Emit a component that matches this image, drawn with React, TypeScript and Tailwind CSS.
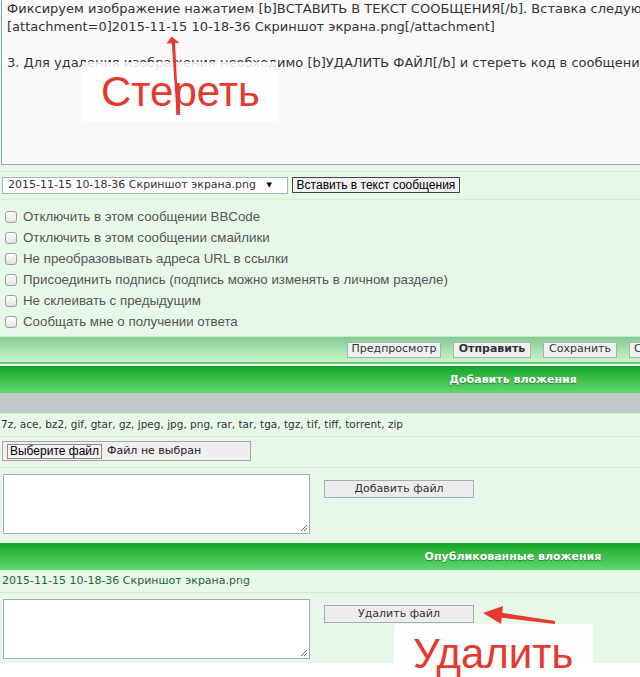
import React from 'react'

const line = 'h-px bg-[#cdeecd]'
const greyBtn =
  'flex h-[16px] shrink-0 items-center justify-center border border-[#a9b1b9] bg-[#f0f0f0] text-[11px] text-[#333]'

const OPTIONS = [
  'Отключить в этом сообщении BBCode',
  'Отключить в этом сообщении смайлики',
  'Не преобразовывать адреса URL в ссылки',
  'Присоединить подпись (подпись можно изменять в личном разделе)',
  'Не склеивать с предыдущим',
  'Сообщать мне о получении ответа',
]

function Grip() {
  return (
    <svg className="absolute bottom-[1px] right-[1px]" width="9" height="9" viewBox="0 0 9 9">
      <path d="M8 2 L2 8 M8 5 L5 8" stroke="#666" strokeWidth="1" />
    </svg>
  )
}

function Box({ children }: { children?: React.ReactNode }) {
  return (
    <div className="relative h-[60px] w-[307px] shrink-0 border border-[#a3adba] bg-white">
      {children}
      <Grip />
    </div>
  )
}

function DarkBar({ title }: { title: string }) {
  return (
    <div className="flex h-[27px] items-center bg-linear-to-b from-[#0aa526] to-[#60d86f] pt-[2px] pl-[386px]">
      <span className="w-[254px] text-center text-[11px] font-bold text-white [text-shadow:0_1px_1px_rgba(0,60,0,0.5)]">
        {title}
      </span>
    </div>
  )
}

export default function App() {
  return (
    <div className="relative h-[677px] w-[640px] overflow-hidden bg-white font-['DejaVu_Sans',sans-serif] text-[#333]">
      <div className="bg-[#e8f8e8]">
        {/* message textarea */}
        <div className="ml-[1px] h-[165px] w-[700px] border-b border-l border-[#8ea6c6] bg-[#f9f9f9] pl-[5px] text-[13px] leading-[18px] whitespace-pre text-[#333]">
          <div>Фиксируем изображение нажатием [b]ВСТАВИТЬ В ТЕКСТ СООБЩЕНИЯ[/b]. Вставка следующего кода</div>
          <div>[attachment=0]2015-11-15 10-18-36 Скриншот экрана.png[/attachment]</div>
          <div>&nbsp;</div>
          <div>3. Для удаления изображения необходимо [b]УДАЛИТЬ ФАЙЛ[/b] и стереть код в сообщении.</div>
        </div>

        <div className="h-[6px]" />
        <div className={line} />

        {/* attachment select */}
        <div className="flex h-[27px] items-start gap-[4px] pt-[5px] pl-[2px]">
          <div className="flex h-[17px] w-[286px] items-center border border-[#a9b1bd] bg-white pl-[5px] text-[11px]">
            <span className="flex-1">2015-11-15 10-18-36 Скриншот экрана.png</span>
            <span className="mr-[15px] text-[7px] text-black">▼</span>
          </div>
          <div className="flex h-[16px] w-[168px] items-center justify-center border border-[#444] bg-[#f0f0f0] font-['Liberation_Sans',sans-serif] text-[12px] text-black">
            Вставить в текст сообщения
          </div>
        </div>
        <div className={line} />

        {/* options */}
        <div className="pt-[6px] pb-[4px]">
          {OPTIONS.map((o) => (
            <div key={o} className="flex h-[21px] items-center pl-[5px]">
              <span className="h-[12px] w-[12px] rounded-[3px] border border-[#a0a0a0] bg-linear-to-b from-white to-[#e2e2e2]" />
              <span className="ml-[6px] font-['Liberation_Sans',sans-serif] text-[13.3px] text-[#555]">{o}</span>
            </div>
          ))}
        </div>

        {/* submit bar */}
        <div className="h-px bg-[#c2ecc2]" />
        <div className="flex h-[25px] items-center gap-[12px] bg-linear-to-b from-[#84cb94] to-[#c9f7c9] pl-[347px]">
          <div className={`${greyBtn} w-[94px]`}>Предпросмотр</div>
          <div className={`${greyBtn} w-[78px] font-bold`}>Отправить</div>
          <div className={`${greyBtn} w-[74px]`}>Сохранить</div>
          <div className={`${greyBtn} px-[4px]`}>Сбросить</div>
        </div>
        <div className="h-[2px] bg-[#70c17b]" />
        <div className="h-[2px] bg-white" />

        <DarkBar title="Добавить вложения" />
        <div className="h-[20px] bg-[#c2c9cd]" />
        <div className={line} />

        <div className="flex h-[22px] items-center pl-[1px] text-[10.5px]">
          7z, ace, bz2, gif, gtar, gz, jpeg, jpg, png, rar, tar, tga, tgz, tif, tiff, torrent, zip
        </div>
        <div className={line} />

        {/* file chooser */}
        <div className="h-[30px] pt-[4px] pl-[2px]">
          <div className="flex h-[20px] w-[249px] items-center border border-[#a6a6a6] bg-[#efefef] pl-[4px]">
            <div className="flex h-[15px] w-[95px] items-center justify-center border border-[#8a8a8a] bg-[#f2f2f2] font-['Liberation_Sans',sans-serif] text-[12px] text-black">
              Выберите файл
            </div>
            <span className="ml-[5px] text-[11px] text-[#222]">Файл не выбран</span>
          </div>
        </div>
        <div className={line} />

        <div className="flex h-[75px] items-start pt-[6px] pl-[3px]">
          <Box />
          <div className="mt-[6px] ml-[14px] flex h-[18px] w-[150px] items-center justify-center border border-[#a3adba] bg-[#ececec] text-[11px] text-[#333]">
            Добавить файл
          </div>
        </div>

        <DarkBar title="Опубликованные вложения" />

        <div className="flex h-[22px] items-center pl-[2px] text-[11px] text-[#23653f]">
          2015-11-15 10-18-36 Скриншот экрана.png
        </div>
        <div className={line} />

        <div className="flex h-[70px] items-start pt-[6px] pl-[3px]">
          <Box />
          <div className="mt-[6px] ml-[14px] flex h-[18px] w-[150px] items-center justify-center border border-[#a3adba] bg-[#ececec] text-[11px] text-[#333]">
            Удалить файл
          </div>
        </div>
      </div>

      {/* annotations */}
      <div className="absolute top-[62px] left-[82px] h-[60px] w-[196px] bg-white/85" />
      <div className="absolute top-[71px] left-[101px] font-['Liberation_Sans',sans-serif] text-[42px] leading-none text-[#e5392e]">
        Стереть
      </div>
      <div className="absolute top-[624px] left-[394px] h-[70px] w-[199px] rounded-[4px] bg-white/90" />
      <div className="absolute top-[633px] left-[413px] font-['Liberation_Sans',sans-serif] text-[42px] leading-none text-[#e5392e]">
        Удалить
      </div>
      <svg className="pointer-events-none absolute top-0 left-0" width="640" height="677" viewBox="0 0 640 677">
        <polygon points="171.7,36.5 166.5,43.5 179.5,43" fill="#e5392e" />
        <polygon points="171.8,43 175,43 178.6,113 176.6,113" fill="#e5392e" />
        <polygon points="483,613 503,606 501,624" fill="#e5392e" />
        <polygon points="500,612.5 500,617.5 555,624 555,621" fill="#e5392e" />
      </svg>
    </div>
  )
}
